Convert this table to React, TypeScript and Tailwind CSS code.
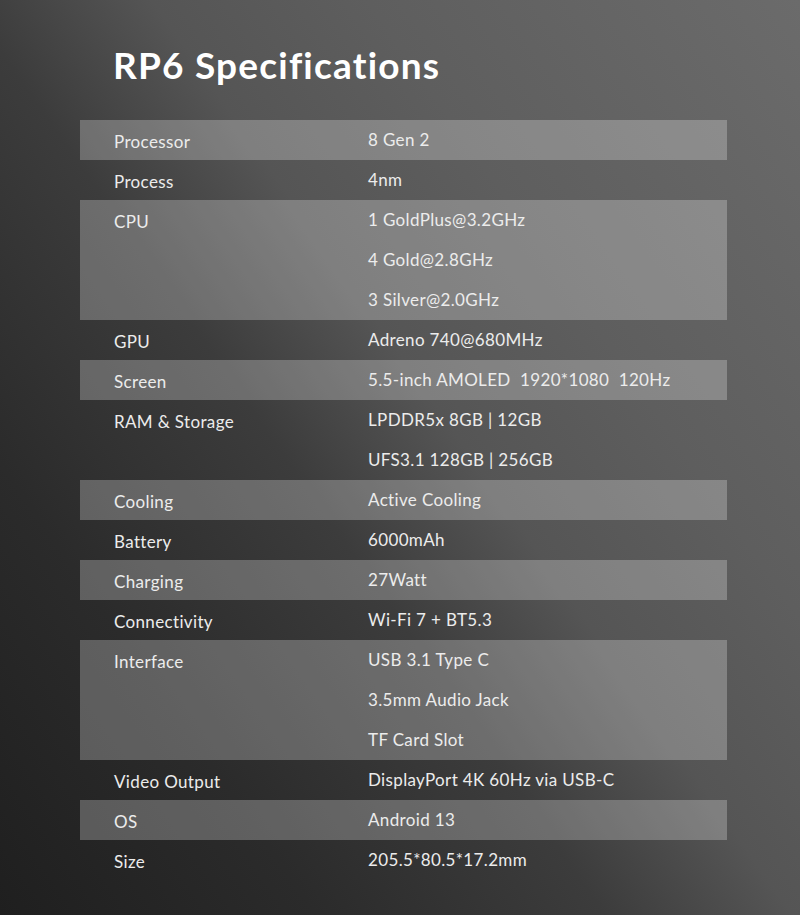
import React from 'react';

type Spec = { label: string; values: string[] };

const specs: Spec[] = [
  { label: 'Processor', values: ['8 Gen 2'] },
  { label: 'Process', values: ['4nm'] },
  { label: 'CPU', values: ['1 GoldPlus@3.2GHz', '4 Gold@2.8GHz', '3 Silver@2.0GHz'] },
  { label: 'GPU', values: ['Adreno 740@680MHz'] },
  { label: 'Screen', values: ['5.5-inch AMOLED\u00a0\u00a01920*1080\u00a0\u00a0120Hz'] },
  { label: 'RAM & Storage', values: ['LPDDR5x 8GB | 12GB', 'UFS3.1 128GB | 256GB'] },
  { label: 'Cooling', values: ['Active Cooling'] },
  { label: 'Battery', values: ['6000mAh'] },
  { label: 'Charging', values: ['27Watt'] },
  { label: 'Connectivity', values: ['Wi-Fi 7 + BT5.3'] },
  { label: 'Interface', values: ['USB 3.1 Type C', '3.5mm Audio Jack', 'TF Card Slot'] },
  { label: 'Video Output', values: ['DisplayPort 4K 60Hz via USB-C'] },
  { label: 'OS', values: ['Android 13'] },
  { label: 'Size', values: ['205.5*80.5*17.2mm'] },
];

export default function App() {
  return (
    <div className="min-h-[915px] w-full bg-[linear-gradient(55deg,#1f1f1f_0%,#2b2b2b_22%,#3c3c3c_42%,#555555_55%,#5e5e5e_70%,#6b6b6b_100%)] font-['Lato','Noto_Sans',sans-serif] text-[#ececec]">
      <div className="px-[80px] pt-[40px] pb-[35px]">
        <h1 className="pl-[33px] text-[37px] font-bold leading-[50px] tracking-[1.2px] text-white">
          RP6 Specifications
        </h1>

        {/* spec table */}
        <div className="mt-[30px] w-[647px]">
          {specs.map((spec, i) => (
            <div
              key={spec.label}
              className={`grid grid-cols-[254px_1fr] pl-[34px] tracking-[0.35px] ${i % 2 === 0 ? 'bg-white/25' : ''}`}
            >
              <div className="h-[40px] pt-[3px] flex items-center text-[17px]">{spec.label}</div>
              <div>
                {spec.values.map((v) => (
                  <div key={v} className="h-[40px] pb-[1px] flex items-center text-[17px]">
                    {v}
                  </div>
                ))}
              </div>
            </div>
          ))}
        </div>
      </div>
    </div>
  );
}
